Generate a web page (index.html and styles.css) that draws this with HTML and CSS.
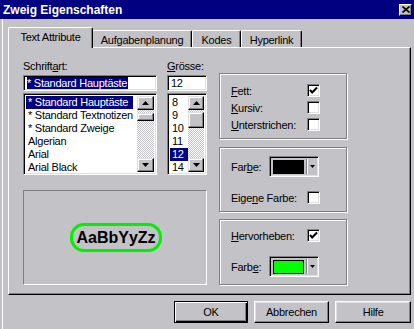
FILE: index.html
```html
<!DOCTYPE html>
<html lang="de">
<head>
    <meta charset="UTF-8">
    <meta name="viewport" content="width=device-width, initial-scale=1.0">
    <title>Zweig Eigenschaften</title>
    <link rel="stylesheet" href="styles.css">
</head>
<body>
    <div class="window">
        <div class="titlebar">
            <span class="title">Zweig Eigenschaften</span>
            <span class="close">
                <svg width="8" height="7" viewBox="0 0 8 7"><path d="M0.5 0.5 L7.5 6.5 M7.5 0.5 L0.5 6.5" stroke="#000" stroke-width="1.6"/></svg>
            </span>
        </div>
        <div class="body">
            <div class="tabs">
                <div class="tab active">Text Attribute</div>
                <div class="tab tab-plan">Aufgabenplanung</div>
                <div class="tab tab-kodes">Kodes</div>
                <div class="tab tab-link">Hyperlink</div>
            </div>
            <div class="panel">
                <div class="left">
                    <div class="fields">
                        <div class="field font-field">
                            <div class="label">Schrift<u>a</u>rt:</div>
                            <div class="input"><span class="sel">* Standard Hauptäste</span></div>
                            <div class="list">
                                <div class="items">
                                    <div class="item selected">* Standard Hauptäste</div>
                                    <div class="item">* Standard Textnotizen</div>
                                    <div class="item">* Standard Zweige</div>
                                    <div class="item">Algerian</div>
                                    <div class="item">Arial</div>
                                    <div class="item">Arial Black</div>
                                </div>
                                <div class="scrollbar">
                                    <div class="sbtn"><svg width="7" height="4" viewBox="0 0 7 4"><polygon points="3.5,0 7,4 0,4" fill="#000"/></svg></div>
                                    <div class="track"><div class="thumb thumb-small"></div></div>
                                    <div class="sbtn"><svg width="7" height="4" viewBox="0 0 7 4"><polygon points="0,0 7,0 3.5,4" fill="#000"/></svg></div>
                                </div>
                            </div>
                        </div>
                        <div class="field size-field">
                            <div class="label"><u>G</u>rösse:</div>
                            <div class="input">12</div>
                            <div class="list">
                                <div class="items">
                                    <div class="item">8</div>
                                    <div class="item">9</div>
                                    <div class="item">10</div>
                                    <div class="item">11</div>
                                    <div class="item selected">12</div>
                                    <div class="item">14</div>
                                </div>
                                <div class="scrollbar">
                                    <div class="sbtn"><svg width="7" height="4" viewBox="0 0 7 4"><polygon points="3.5,0 7,4 0,4" fill="#000"/></svg></div>
                                    <div class="track"><div class="thumb thumb-big"></div></div>
                                    <div class="sbtn"><svg width="7" height="4" viewBox="0 0 7 4"><polygon points="0,0 7,0 3.5,4" fill="#000"/></svg></div>
                                </div>
                            </div>
                        </div>
                    </div>
                    <div class="preview">
                        <span class="sample">AaBbYyZz</span>
                    </div>
                </div>

                <div class="right">
                    <div class="group group-style">
                        <div class="row">
                            <span class="row-label"><u>F</u>ett:</span>
                            <span class="check"><svg width="9" height="9" viewBox="0 0 9 9"><polyline points="1,4 3.2,6.5 8,1.5" fill="none" stroke="#000" stroke-width="2"/></svg></span>
                        </div>
                        <div class="row">
                            <span class="row-label"><u>K</u>ursiv:</span>
                            <span class="check"></span>
                        </div>
                        <div class="row">
                            <span class="row-label"><u>U</u>nterstrichen:</span>
                            <span class="check"></span>
                        </div>
                    </div>

                    <div class="group group-color">
                        <div class="row combo-row">
                            <span class="combo-label">Far<u>b</u>e:</span>
                            <span class="combo">
                                <span class="swatch black"></span>
                                <span class="drop"><svg width="5" height="3" viewBox="0 0 5 3"><polygon points="0,0 5,0 2.5,3" fill="#000"/></svg></span>
                            </span>
                        </div>
                        <div class="row own-row">
                            <span class="row-label">Eige<u>n</u>e Farbe:</span>
                            <span class="check"></span>
                        </div>
                    </div>

                    <div class="group group-mark">
                        <div class="row">
                            <span class="row-label"><u>H</u>ervorheben:</span>
                            <span class="check"><svg width="9" height="9" viewBox="0 0 9 9"><polyline points="1,4 3.2,6.5 8,1.5" fill="none" stroke="#000" stroke-width="2"/></svg></span>
                        </div>
                        <div class="row combo-row mark-combo">
                            <span class="combo-label">Farb<u>e</u>:</span>
                            <span class="combo">
                                <span class="swatch green"></span>
                                <span class="drop"><svg width="5" height="3" viewBox="0 0 5 3"><polygon points="0,0 5,0 2.5,3" fill="#000"/></svg></span>
                            </span>
                        </div>
                    </div>
                </div>
            </div>

            <div class="buttons">
                <div class="btn default">OK</div>
                <div class="btn">Abbrechen</div>
                <div class="btn">Hilfe</div>
            </div>
        </div>
    </div>
</body>
</html>
```

FILE: styles.css
```css
body {
    margin: 0;
    padding: 0;
    font-family: "Liberation Sans", Arial, sans-serif;
    font-size: 11px;
    letter-spacing: -0.25px;
    color: #000;
    background-color: #c3c2c6;
}
.window {
    width: 414px;
    height: 329px;
    background-color: #c3c2c6;
    overflow: hidden;
}
.titlebar {
    height: 19px;
    background-color: #000080;
    display: flex;
    align-items: center;
    justify-content: space-between;
    padding: 0 2px 0 3px;
}
.title {
    color: #fff;
    font-weight: bold;
    font-size: 12px;
    letter-spacing: 0;
}
.close {
    width: 11px;
    height: 10px;
    display: flex;
    align-items: center;
    justify-content: center;
    background-color: #c3c2c6;
    border: 1px solid;
    border-color: #fff #000 #000 #fff;
    box-shadow: inset -1px -1px #808080;
}
.body {
    margin-left: 2px;
    border-left: 1px solid #fff;
    height: 310px;
    padding: 8px 0 0 5px;
    box-sizing: border-box;
}

/* tabs */
.tabs {
    display: flex;
    align-items: flex-end;
    height: 20px;
}
.tab {
    height: 17px;
    box-sizing: border-box;
    display: flex;
    align-items: center;
    justify-content: center;
    padding-top: 2px;
    border: 1px solid;
    border-bottom: none;
    border-color: #fff #000 #000 #fff;
    border-radius: 2px 2px 0 0;
    box-shadow: inset -1px 0 #808080;
    position: relative;
}
.tab.active {
    width: 85px;
    height: 21px;
    padding-top: 0;
    padding-bottom: 2px;
    margin-bottom: -1px;
    background-color: #c3c2c6;
    z-index: 1;
}
.tab-plan { width: 100px; margin-left: -1px; }
.tab-kodes { width: 49px; }
.tab-link { width: 61px; }

.panel {
    width: 403px;
    height: 248px;
    box-sizing: border-box;
    border: 1px solid;
    border-color: #fff #000 #000 #fff;
    box-shadow: inset -1px -1px #808080;
    display: flex;
    gap: 12px;
    padding: 12px 0 0 14px;
}

/* left column */
.left {
    width: 184px;
}
.fields {
    display: flex;
    gap: 10px;
}
.label {
    height: 13px;
    line-height: 13px;
    margin-bottom: 2px;
}
.input {
    height: 16px;
    box-sizing: border-box;
    border: 1px solid;
    border-color: #808080 #fff #fff #808080;
    box-shadow: inset 1px 1px #000, inset -1px -1px #dfdfdf;
    background-color: #fff;
    padding: 1px 0 0 3px;
    line-height: 13px;
    margin-bottom: 2px;
    white-space: nowrap;
}
.input .sel {
    background-color: #000080;
    color: #fff;
    padding: 0 1px 0 0;
}
.font-field { width: 134px; }
.size-field { width: 40px; }

.list {
    height: 82px;
    box-sizing: border-box;
    border: 1px solid;
    border-color: #808080 #fff #fff #808080;
    box-shadow: inset 1px 1px #000, inset -1px -1px #dfdfdf;
    background-color: #fff;
    padding: 2px;
    display: flex;
}
.items {
    flex: 1;
    overflow: hidden;
}
.item {
    height: 13px;
    line-height: 13px;
    padding-left: 2px;
    white-space: nowrap;
}
.font-field .item {
    margin-right: 4px;
}
.item.selected {
    background-color: #000080;
    color: #fff;
}
.scrollbar {
    width: 17px;
    display: flex;
    flex-direction: column;
    background: repeating-conic-gradient(#c3c2c6 0 25%, #fff 0 50%) 0 0 / 2px 2px;
}
.size-field .scrollbar { width: 16px; }
.sbtn, .thumb {
    box-sizing: border-box;
    background-color: #c3c2c6;
    border: 1px solid;
    border-color: #dfdfdf #000 #000 #dfdfdf;
    box-shadow: inset -1px -1px #808080, inset 1px 1px #fff;
}
.sbtn {
    height: 14px;
    display: flex;
    align-items: center;
    justify-content: center;
}
.track {
    flex: 1;
}
.thumb-small {
    margin-top: 3px;
    height: 8px;
}
.thumb-big {
    margin-top: 2px;
    height: 16px;
}

.preview {
    margin-top: 15px;
    height: 95px;
    box-sizing: border-box;
    border: 1px solid;
    border-color: #808080 #fff #fff #808080;
    display: flex;
    align-items: center;
    justify-content: center;
}
.sample {
    font-weight: bold;
    font-size: 16px;
    letter-spacing: 0;
    line-height: 19px;
    padding: 2px 3px;
    border: 3px solid #00f000;
    border-radius: 14px;
    margin-left: 2px;
}

/* right column */
.right {
    width: 128px;
    padding-top: 13px;
    display: flex;
    flex-direction: column;
}
.group {
    box-sizing: border-box;
    border: 1px solid #808080;
    box-shadow: 1px 1px 0 #fff, inset 1px 1px 0 #fff;
    padding-left: 11px;
}
.group-style {
    height: 66px;
    padding-top: 8px;
}
.group-color {
    height: 65px;
    margin-top: 8px;
    padding-top: 8px;
}
.group-mark {
    height: 66px;
    margin-top: 7px;
    padding-top: 7px;
}
.row {
    height: 17px;
    display: flex;
    align-items: center;
}
.row-label {
    width: 76px;
}
.own-row, .mark-combo {
    margin-top: 12px;
}
.check {
    width: 13px;
    height: 13px;
    box-sizing: border-box;
    border: 1px solid;
    border-color: #808080 #fff #fff #808080;
    box-shadow: inset 1px 1px #000, inset -1px -1px #dfdfdf;
    background-color: #fff;
    display: flex;
    align-items: center;
    justify-content: center;
}
.combo-row {
    height: 21px;
}
.combo-label {
    width: 38px;
}
.combo {
    width: 50px;
    height: 21px;
    box-sizing: border-box;
    border: 1px solid;
    border-color: #808080 #fff #fff #808080;
    box-shadow: inset 1px 1px #000, inset -1px -1px #dfdfdf;
    display: flex;
    align-items: center;
    padding: 2px 2px 2px 3px;
}
.swatch {
    width: 32px;
    height: 14px;
    box-sizing: border-box;
    border: 1px solid #000;
}
.swatch.black { background-color: #000; }
.swatch.green { background-color: #00ff00; }
.drop {
    margin-left: 3px;
    width: 9px;
    height: 15px;
    box-sizing: border-box;
    border-left: 1px solid #fff;
    box-shadow: -1px 0 #808080;
    display: flex;
    align-items: center;
    justify-content: center;
}

/* bottom buttons */
.buttons {
    display: flex;
    justify-content: flex-end;
    gap: 6px;
    padding: 6px 0 0 0;
    margin-left: 166px;
    width: 237px;
}
.btn {
    height: 22px;
    box-sizing: border-box;
    display: flex;
    align-items: center;
    justify-content: center;
    border: 1px solid;
    border-color: #fff #000 #000 #fff;
    box-shadow: inset -1px -1px #808080, inset 1px 1px #dfdfdf;
    width: 76px;
}
.btn.default {
    width: 74px;
    border-color: #000;
    box-shadow: inset 1px 1px #fff, inset -1px -1px #000, inset -2px -2px #808080;
}
```
